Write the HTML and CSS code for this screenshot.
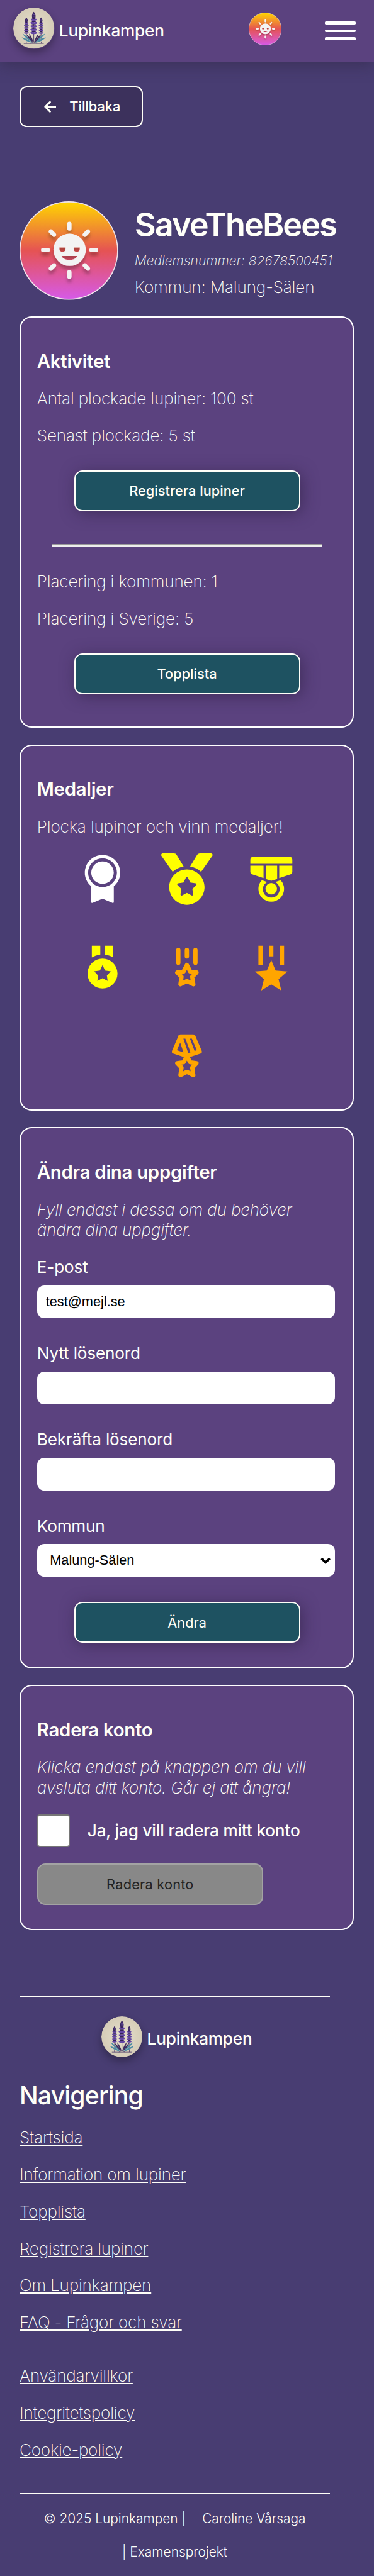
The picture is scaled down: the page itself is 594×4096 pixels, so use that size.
FILE: index.html
```
<!DOCTYPE html>
<html lang="sv">
<head>
<meta charset="utf-8">
<title>Lupinkampen</title>
<link rel="stylesheet" href="styles.css">
</head>
<body>
<svg class="sprite" aria-hidden="true">
  <defs>
    <linearGradient id="sky" x1="0" y1="0" x2="0" y2="1">
      <stop offset="0" stop-color="#ffd600"/>
      <stop offset=".5" stop-color="#e55353"/>
      <stop offset="1" stop-color="#d65ae8"/>
    </linearGradient>
    <radialGradient id="paper">
      <stop offset="0" stop-color="#e6dfcc"/>
      <stop offset="1" stop-color="#d5ccb7"/>
    </radialGradient>
    <filter id="drop" x="-20%" y="-20%" width="140%" height="150%">
      <feDropShadow dx="0" dy="7" stdDeviation="3.5" flood-color="#000" flood-opacity=".26"/>
    </filter>
  </defs>
  <symbol id="spike" viewBox="0 0 14 60">
    <path d="M7 10V60" stroke="#4b3a66" stroke-width="1.2"/>
    <path d="M7 0L9.500 4L10.600 8L10 13H4L3.400 8L4.500 4Z" fill="#3b2763"/>
    <g fill="#6446a6">
      <path d="M1.200 14.500q2.800-2 5.800 0q3-2 5.800 0q-.5 4-5.800 3.300q-5.300 .7-5.800-3.300z"/>
      <path d="M.3 21q3-2 6.700 0q3.700-2 6.700 0q-.7 4-6.700 3.300q-6 .7-6.700-3.300z"/>
      <path d="M.3 27.500q3-2 6.700 0q3.700-2 6.700 0q-.7 4-6.700 3.300q-6 .7-6.700-3.300z"/>
      <path d="M.3 34q3-2 6.700 0q3.700-2 6.700 0q-.7 4-6.700 3.300q-6 .7-6.700-3.300z"/>
      <path d="M.3 40.500q3-2 6.700 0q3.700-2 6.700 0q-.7 4-6.700 3.300q-6 .7-6.700-3.300z"/>
    </g>
    <g fill="#35215c">
      <path d="M4.200 12.500h5.600v2.400H4.200zM3.300 18h7.400v2.300H3.300zM3.300 24.500h7.400v2.300H3.300zM3.300 31h7.400v2.300H3.300zM3.300 37.500h7.400v2.300H3.300z"/>
    </g>
    <path d="M5.500 9h3M5.500 6h3" stroke="#7d62bd" stroke-width=".8"/>
  </symbol>
  <symbol id="logo" viewBox="0 0 80 80">
    <circle cx="40" cy="40" r="40" fill="url(#paper)"/>
    <use href="#spike" x="20.200" y="19" width="10.800" height="44"/>
    <use href="#spike" x="48.800" y="19" width="10.800" height="44"/>
    <use href="#spike" x="33" y="8" width="14" height="60"/>
    <g fill="#4b8ba3">
      <path d="M38 69Q22 65.500 16.500 58Q26 60 38 69z"/>
      <path d="M38 68Q23 60 18 50.500Q28 56 38 68z"/>
      <path d="M42 69Q58 65.500 63.500 58Q54 60 42 69z"/>
      <path d="M42 68Q57 60 62 50.500Q52 56 42 68z"/>
    </g>
    <g fill="#3c2a5e">
      <path d="M39.500 68.500Q28 60.500 25.500 51.500Q33 57.500 39.500 68.500z"/>
      <path d="M39.700 68Q31.500 59 30.700 50.500Q36.500 57 39.700 68z"/>
      <path d="M40.500 68.500Q52 60.500 54.500 51.500Q47 57.500 40.500 68.500z"/>
      <path d="M40.300 68Q48.500 59 49.300 50.500Q43.500 57 40.300 68z"/>
    </g>
    <path d="M20.500 70H59.500M25.500 66v4M54.500 66v4M34 70l6-3l6 3" fill="none" stroke="#4a3a66" stroke-width="1"/>
  </symbol>
  <symbol id="sun" viewBox="0 0 192 192">
    <circle cx="96" cy="96" r="95" fill="url(#sky)" stroke="#efe3ea" stroke-width="2"/>
    <g filter="url(#drop)">
      <path d="M97 44V53M97 138V147M46 95H55M140 95H149M61 59L67 65M133 59L127 65M61 131L67 125M133 131L127 125" stroke="#f3f3f3" stroke-width="8.400" stroke-linecap="round"/>
      <path fill="#f3f3f3" fill-rule="evenodd" d="M97.500 63a31.500 31.500 0 1 1 0 63a31.500 31.500 0 1 1 0-63zM77.600 90v3a6 6 0 0 0 12 0v-3zM105.300 90v3a6 6 0 0 0 12 0v-3zM81.800 106.500c4 10.500 26.500 10.500 30.600 0z"/>
    </g>
  </symbol>
</svg>

<header class="topbar">
  <a class="brand"><svg class="brand-logo"><use href="#logo"/></svg><span class="brand-name">Lupinkampen</span></a>
  <svg class="topbar-avatar"><use href="#sun"/></svg>
  <div class="burger"><i></i><i></i><i></i></div>
</header>

<main class="page">
  <a class="back">
    <svg class="back-icon" viewBox="0 0 24 24"><path d="M11.500 2.800L2.300 12l9.200 9.200M2.800 12H22.300" fill="none" stroke="currentColor" stroke-width="3.700" stroke-linecap="round" stroke-linejoin="round"/></svg>
    <span>Tillbaka</span>
  </a>

  <section class="profile">
    <svg class="profile-avatar"><use href="#sun"/></svg>
    <div class="profile-info">
      <h1>SaveTheBees</h1>
      <p class="member">Medlemsnummer: 82678500451</p>
      <p class="text">Kommun: Malung-Sälen</p>
    </div>
  </section>

  <section class="card card-activity">
    <h3>Aktivitet</h3>
    <p class="text">Antal plockade lupiner: 100 st</p>
    <p class="text">Senast plockade: 5 st</p>
    <a class="btn">Registrera lupiner</a>
    <div class="divider"></div>
    <p class="text">Placering i kommunen: 1</p>
    <p class="text">Placering i Sverige: 5</p>
    <a class="btn">Topplista</a>
  </section>

  <section class="card card-medals">
    <h3>Medaljer</h3>
    <p class="text">Plocka lupiner och vinn medaljer!</p>
    <div class="medals">
      <svg class="medal white" viewBox="0 0 100 100"><path fill-rule="evenodd" d="M50 3.100a34.400 34.400 0 0 1 22 60.900V94.500a2 2 0 0 1-3.200 1.700L50 88.300L31.200 96.200A2 2 0 0 1 28 94.500V64A34.400 34.400 0 0 1 50 3.100zM50 9.400a28.100 28.100 0 1 0 0 56.200a28.100 28.100 0 1 0 0-56.200z"/><circle cx="50" cy="37.500" r="21.900"/></svg>
      <svg class="medal gold" viewBox="0 0 512 512"><path d="M223.750 130.750L154.620 15.540A31.997 31.997 0 0 0 127.180 0H16.030C3.080 0-4.500 14.570 2.920 25.180l111.270 158.960c29.720-27.770 67.520-46.830 109.560-53.390zM495.970 0H384.820c-11.240 0-21.660 5.900-27.440 15.540l-69.130 115.210c42.040 6.560 79.840 25.620 109.560 53.380L509.080 25.180C516.500 14.570 508.920 0 495.970 0zM256 160c-97.200 0-176 78.800-176 176s78.800 176 176 176 176-78.800 176-176-78.800-176-176-176zm92.520 157.260l-37.930 36.960 8.970 52.220c1.600 9.360-8.260 16.510-16.650 12.090L256 393.880l-46.900 24.650c-8.400 4.450-18.250-2.740-16.650-12.090l8.970-52.220-37.930-36.960c-6.820-6.640-3.050-18.230 6.350-19.590l52.430-7.640 23.430-47.520c2.110-4.280 6.190-6.390 10.280-6.390 4.110 0 8.220 2.140 10.330 6.390l23.430 47.520 52.430 7.640c9.400 1.360 13.170 12.950 6.350 19.590z"/></svg>
      <svg class="medal gold" viewBox="0 0 100 100"><path d="M15.600 6.200H85a6 6 0 0 1 6 6V20.300H9.300V12.200a6 6 0 0 1 6.300-6zM9.300 24H35V48.200L13 40.600A5.500 5.500 0 0 1 9.300 35.500zM39.600 24H61.500V50L50 53.200L39.600 50zM65.500 24H91V35.500A5.500 5.500 0 0 1 87.500 40.600L65.500 48.200z"/><path fill-rule="evenodd" d="M31.800 52L42 55.600A16.300 16.300 0 1 0 58 55.600L68.200 52A25 25 0 1 1 31.800 52z"/><circle cx="50" cy="68.800" r="11.200"/></svg>
      <svg class="medal gold" viewBox="0 0 100 100"><path d="M29.200 8.300H45.700V25.300Q36.500 26.500 29.200 31.200zM54 8.300H70.800V31.200Q63.500 26.500 54 25.300z"/><path fill-rule="evenodd" d="M50 33.300a29.200 29.200 0 1 0 0 58.400a29.200 29.200 0 1 0 0-58.400zM50 45.800L55 56.600L66.100 58.200L58.500 66.400L60 77L50 71.800L40 77L41.500 66.400L33.900 58.200L45 56.600z"/></svg>
      <svg class="medal bronze-line" viewBox="0 0 24 24"><path d="M12 4v3M8 4v6M16 4v6M12 18.500l-3 1.500l.5-3.500l-2-2l3-.5l1.500-3l1.500 3l3 .5l-2 2l.5 3.500z"/></svg>
      <svg class="medal bronze" viewBox="0 0 24 24"><path d="M6 2h2v9H6zM11 2h2v5h-2zM16 2h2v9h-2zM12 8.700L14.040 13.600L19.580 14.050L15.400 17.650L16.700 22.900L12 20.100L7.300 22.900L8.600 17.650L4.420 14.050L9.960 13.600z"/></svg>
      <svg class="medal bronze-line" viewBox="0 0 24 24"><path d="M9 3h6l3 7l-6 2l-6-2zM12 12L9 3M15 11L12 3M12 19.500l-3 1.500l.5-3.500l-2-2l3-.5l1.500-3l1.500 3l3 .5l-2 2l.5 3.500z"/></svg>
    </div>
  </section>

  <section class="card card-form">
    <h3>Ändra dina uppgifter</h3>
    <p class="text note">Fyll endast i dessa om du behöver<br>ändra dina uppgifter.</p>
    <div class="field"><label for="epost">E-post</label><input id="epost" type="email" value="test@mejl.se"></div>
    <div class="field"><label for="nytt">Nytt lösenord</label><input id="nytt" type="password"></div>
    <div class="field"><label for="igen">Bekräfta lösenord</label><input id="igen" type="password"></div>
    <div class="field"><label for="kommun">Kommun</label>
      <div class="select">
        <select id="kommun"><option>Malung-Sälen</option></select>
        <svg class="chevron" viewBox="0 0 20 14"><path d="M2 2.500L10 10.500L18 2.500" fill="none" stroke="#000" stroke-width="4.400"/></svg>
      </div>
    </div>
    <button class="btn btn-submit" type="button">Ändra</button>
  </section>

  <section class="card card-delete">
    <h3>Radera konto</h3>
    <p class="text note">Klicka endast på knappen om du vill<br>avsluta ditt konto. Går ej att ångra!</p>
    <label class="confirm"><span class="checkbox"></span><span>Ja, jag vill radera mitt konto</span></label>
    <button class="btn btn-off" type="button" disabled>Radera konto</button>
  </section>
</main>

<footer class="footer">
  <div class="footer-top">
    <a class="brand"><svg class="brand-logo"><use href="#logo"/></svg><span class="brand-name">Lupinkampen</span></a>
  </div>
  <h2>Navigering</h2>
  <nav class="links">
    <a>Startsida</a>
    <a>Information om lupiner</a>
    <a>Topplista</a>
    <a>Registrera lupiner</a>
    <a>Om Lupinkampen</a>
    <a>FAQ - Frågor och svar</a>
  </nav>
  <nav class="links legal-links">
    <a>Användarvillkor</a>
    <a>Integritetspolicy</a>
    <a>Cookie-policy</a>
  </nav>
  <div class="legal">
    <span>© 2025 Lupinkampen |</span>
    <span>Caroline Vårsaga</span>
    <span>| Examensprojekt</span>
  </div>
</footer>
</body>
</html>
```
FILE: styles.css
```
html {
  font-size: 16.325px;
  background: #483d72;
}

* {
  box-sizing: border-box;
}

body {
  margin: 0;
  font-family: Inter, "Liberation Sans", sans-serif;
  font-size: 1.6rem;
  line-height: 2rem;
  letter-spacing: -0.006em;
  color: #fffff8;
  overflow: hidden;
}

h1, h2, h3, p {
  margin: 0;
}

.sprite {
  position: absolute;
  width: 0;
  height: 0;
}

/* Header */
.topbar {
  display: flex;
  height: 6rem;
  padding-left: 1.3rem;
  background: #5b427f;
  box-shadow: 0 0.4rem 1.4rem rgba(50, 40, 70, 0.55);
}

.brand {
  display: flex;
  align-items: center;
  gap: 0.45rem;
  height: 4rem;
}

.topbar .brand {
  margin-top: 0.75rem;
}

.brand-logo {
  width: 4rem;
  height: 4rem;
  border-radius: 50%;
  box-shadow: 0 0.4rem 0.8rem rgba(0, 0, 0, 0.3);
}

.brand-name {
  padding-top: 0.55rem;
  font-weight: 450;
}

.topbar-avatar {
  width: 3.2rem;
  height: 3.2rem;
  margin: 1.2rem 4.2rem 0 auto;
}

.burger {
  display: flex;
  flex-direction: column;
  gap: 0.45rem;
  width: 3rem;
  margin: 2.1rem 1.8rem 0 0;
}

.burger i {
  height: 0.3rem;
  border-radius: 0.1rem;
  background: #fff;
}

/* Page */
.page {
  padding: 2.4rem 0 0 1.9rem;
}

.back {
  display: flex;
  align-items: center;
  width: 12rem;
  height: 4rem;
  padding: 0 0 0 2.25rem;
  gap: 1.28rem;
  border: 2px solid #fffff8;
  border-radius: 0.7rem;
  background: #3c315c;
  font-size: 1.333rem;
  font-weight: 450;
  letter-spacing: 0;
}

.back-icon {
  width: 1.2rem;
  height: 1.2rem;
}

.profile {
  display: flex;
  gap: 1.6rem;
  height: 9.6rem;
  margin-top: 7.2rem;
}

.profile-avatar {
  width: 9.6rem;
  height: 9.6rem;
}

.profile-info {
  padding-top: 0.35rem;
}

h1 {
  font-size: 3.2rem;
  font-weight: 600;
  line-height: 3.8rem;
  letter-spacing: -0.038em;
}

.member {
  margin: 0.9rem 0 0.78rem;
  font-size: 1.28rem;
  font-style: italic;
  font-weight: 250;
  line-height: 1.6rem;
  letter-spacing: 0.006em;
}

.text {
  font-weight: 250;
}

/* Cards */
.card {
  display: flex;
  flex-direction: column;
  width: 32.5rem;
  margin-top: 1.6rem;
  padding: 3.17rem 1.58rem 0;
  border: 2px solid #fff;
  border-radius: 1.2rem;
  background: #5b427f;
}

.card .text {
  margin-bottom: 1.6rem;
  font-weight: 230;
  letter-spacing: -0.006em;
}

h3 {
  margin-bottom: 1.57rem;
  font-size: 1.8rem;
  font-weight: 560;
  line-height: 2.2rem;
  letter-spacing: -0.01em;
}

.card-activity { height: 40.1rem; }
.card-medals { height: 35.7rem; }
.card-form { height: 52.7rem; }
.card-delete { height: 23.9rem; }

.btn {
  display: flex;
  align-items: center;
  justify-content: center;
  width: 22rem;
  height: 4rem;
  margin: 0.74rem 0 0 3.6rem;
  padding: 0;
  border: 2px solid #fffff8;
  border-radius: 0.8rem;
  background: #1e5261;
  box-shadow: 0.2rem 0.2rem 1.5rem rgba(40, 25, 60, 0.5);
  color: #fffff8;
  font-family: inherit;
  font-size: 1.333rem;
  font-weight: 480;
  letter-spacing: 0;
}

.divider {
  width: 26.2rem;
  height: 0.2rem;
  margin: 3.2rem 0 2.46rem 1.5rem;
  border-top: 2px solid #9a9a9a;
  border-bottom: 2px solid #eee;
}

.medals {
  display: flex;
  flex-wrap: wrap;
  justify-content: center;
  gap: 3.6rem 3.2rem;
  width: 28rem;
  margin: -0.04rem 0 0 0.6rem;
}

.medal {
  width: 5rem;
  height: 5rem;
}

.white { fill: #fff; }
.gold { fill: #ff0; }
.bronze { fill: #ffa500; }

.bronze-line {
  fill: none;
  stroke: #ffa500;
  stroke-width: 2;
  stroke-linecap: round;
  stroke-linejoin: round;
}

.card .note {
  font-style: italic;
}

/* Form */
.field {
  display: flex;
  flex-direction: column;
  gap: 0.74rem;
  margin-bottom: 2.46rem;
  font-weight: 420;
}

.field input,
.field select {
  width: 29rem;
  height: 3.2rem;
  padding: 0 0.85rem;
  border: 0;
  border-radius: 0.7rem;
  background: #fff;
  color: #000;
  font: 1.333rem/1.6rem "Liberation Sans", Arial, sans-serif;
  appearance: none;
}

.field select {
  display: block;
  padding: 0 1.25rem;
}

.select {
  position: relative;
  width: 29rem;
}

.chevron {
  position: absolute;
  top: 1.25rem;
  right: 0.4rem;
  width: 1rem;
  height: 0.7rem;
}

.btn-submit {
  margin-top: -0.04rem;
  font-weight: 400;
}

.confirm {
  display: flex;
  align-items: center;
  gap: 1.7rem;
  margin-top: -0.04rem;
  font-weight: 470;
}

.checkbox {
  width: 3.2rem;
  height: 3.2rem;
  border: 2px solid #767676;
  border-radius: 0.25rem;
  background: #fff;
}

.btn-off {
  margin: 1.6rem 0 0;
  border-color: #a3a3a3;
  background: #888;
  box-shadow: none;
  color: #222;
  font-weight: 400;
  letter-spacing: 0.01em;
}

/* Footer */
.footer {
  width: 30.2rem;
  margin: 6.4rem 0 0 1.9rem;
}

.footer-top {
  display: flex;
  justify-content: center;
  height: 8.27rem;
  padding: 1.85rem 0 0 0.4rem;
  border-top: 2px solid #fffff8;
}

h2 {
  font-size: 2.4rem;
  font-weight: 500;
  line-height: 2.9rem;
  letter-spacing: -0.021em;
}

.links {
  display: flex;
  flex-direction: column;
  align-items: flex-start;
  gap: 1.6rem;
  margin-top: 1.69rem;
  font-weight: 250;
  letter-spacing: -0.008em;
}

.links a {
  text-decoration: underline;
}

.legal-links {
  margin-top: 3.2rem;
}

.legal {
  display: flex;
  flex-wrap: wrap;
  justify-content: center;
  gap: 1.6rem;
  margin-top: 3.14rem;
  padding-top: 1.65rem;
  border-top: 2px solid #fffff8;
  font-size: 1.28rem;
  font-weight: 270;
  line-height: 1.6rem;
  letter-spacing: 0;
}
```
